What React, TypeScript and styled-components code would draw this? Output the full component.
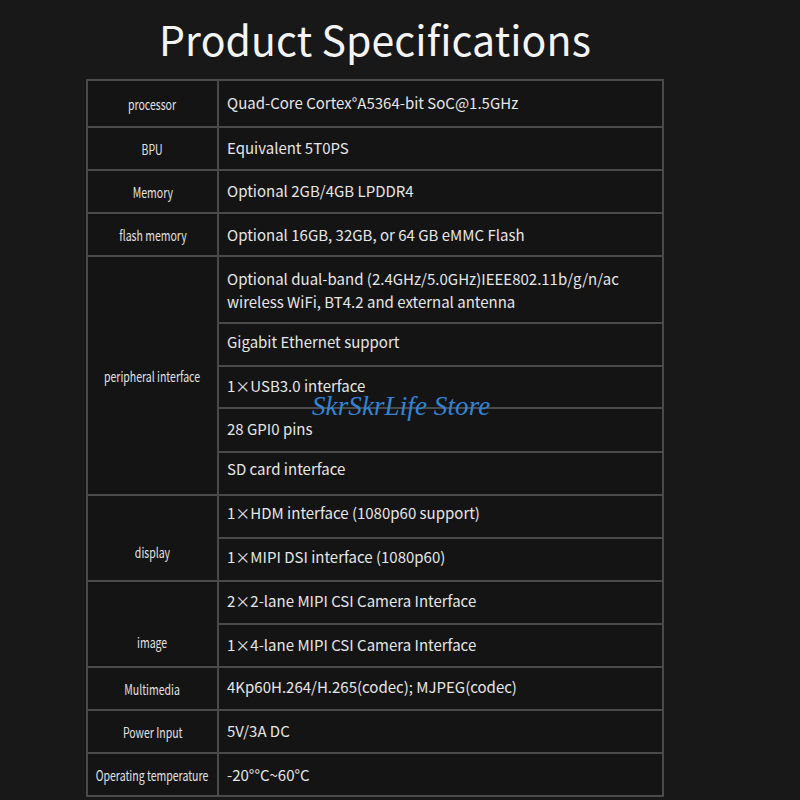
import React from "react";
import styled, { createGlobalStyle } from "styled-components";

const GlobalStyle = createGlobalStyle`
  html, body {
    margin: 0;
    padding: 0;
    background: #181818;
  }
`;

const Page = styled.div`
  position: relative;
  width: 578px;
  margin-left: 86px;
  font-family: "Noto Sans CJK SC", "Noto Sans", sans-serif;
`;

const Title = styled.h1`
  margin: 0 0 11px;
  padding-top: 9px;
  height: 59px;
  line-height: 58px;
  text-align: center;
  font-size: 41px;
  font-weight: 400;
  color: #f4f4f4;
  letter-spacing: 0.1px;
`;

const SpecTable = styled.table`
  width: 578px;
  border-collapse: collapse;
  background: #141414;
  table-layout: fixed;
`;

const LabelCell = styled.td<{ $drop?: number }>`
  width: 131px;
  border: 2px solid #4a4a4a;
  text-align: center;
  vertical-align: middle;
  padding: ${(p) => p.$drop || 0}px 0 0;
  color: #e2e2e2;
  font-size: 14px;
  box-sizing: border-box;
`;

// condensed label text; negative margins keep the squeezed span centred
const Narrow = styled.span`
  display: inline-block;
  margin: 0 -30px;
  transform: scaleX(0.75);
  white-space: nowrap;
`;

// $shift moves the text up (negative) or down (positive) inside its row
const ValueCell = styled.td<{ $h: number; $shift?: number }>`
  height: ${(p) => p.$h}px;
  border: 2px solid #4a4a4a;
  padding: ${(p) => Math.max(0, (p.$shift || 0) * 2)}px 8px
    ${(p) => Math.max(0, -(p.$shift || 0) * 2) + 3}px 8px;
  color: #e6e6e6;
  font-size: 15px;
  line-height: 23px;
  vertical-align: middle;
  box-sizing: border-box;
`;

const Watermark = styled.div`
  position: absolute;
  top: 391px;
  left: 226px;
  font-family: "Liberation Serif", serif;
  font-style: italic;
  font-size: 27px;
  letter-spacing: 0.1px;
  color: #3383d2;
  white-space: nowrap;
  pointer-events: none;
`;

type Spec = {
  label: string;
  drop?: number;
  values: { text: string; h: number; shift?: number }[];
};

const specs: Spec[] = [
  { label: "processor", values: [{ text: "Quad-Core Cortex°A5364-bit SoC@1.5GHz", h: 47 }] },
  { label: "BPU", values: [{ text: "Equivalent 5T0PS", h: 43 }] },
  { label: "Memory", values: [{ text: "Optional 2GB/4GB LPDDR4", h: 43 }] },
  { label: "flash memory", values: [{ text: "Optional 16GB, 32GB, or 64 GB eMMC Flash", h: 43, shift: 1 }] },
  {
    label: "peripheral interface",
    values: [
      {
        text: "Optional dual-band (2.4GHz/5.0GHz)IEEE802.11b/g/n/ac wireless WiFi, BT4.2 and external antenna",
        h: 67,
        shift: 2,
      },
      { text: "Gigabit Ethernet support", h: 43, shift: -2 },
      { text: "1×USB3.0 interface", h: 42 },
      { text: "28 GPI0 pins", h: 44 },
      { text: "SD card interface", h: 43, shift: -4 },
    ],
  },
  {
    label: "display",
    drop: 28,
    values: [
      { text: "1×HDM interface (1080p60 support)", h: 43, shift: -3 },
      { text: "1×MIPI DSI interface (1080p60)", h: 43, shift: -2 },
    ],
  },
  {
    label: "image",
    drop: 36,
    values: [
      { text: "2×2-lane MIPI CSI Camera Interface", h: 43, shift: -1 },
      { text: "1×4-lane MIPI CSI Camera Interface", h: 43 },
    ],
  },
  { label: "Multimedia", values: [{ text: "4Kp60H.264/H.265(codec); MJPEG(codec)", h: 43, shift: -1 }] },
  { label: "Power Input", values: [{ text: "5V/3A DC", h: 43 }] },
  { label: "Operating temperature", values: [{ text: "-20°°C~60°C", h: 43, shift: 1 }] },
];

const App: React.FC = () => {
  return (
    <>
      <GlobalStyle />
      <Page>
        <Title>Product Specifications</Title>
        <SpecTable>
          <tbody>
            {specs.map((spec) =>
              spec.values.map((v, i) => (
                <tr key={spec.label + i}>
                  {i === 0 && (
                    <LabelCell rowSpan={spec.values.length} $drop={spec.drop}>
                      <Narrow>{spec.label}</Narrow>
                    </LabelCell>
                  )}
                  <ValueCell $h={v.h} $shift={v.shift}>
                    {v.text}
                  </ValueCell>
                </tr>
              ))
            )}
          </tbody>
        </SpecTable>
        <Watermark>SkrSkrLife Store</Watermark>
      </Page>
    </>
  );
};

export default App;
